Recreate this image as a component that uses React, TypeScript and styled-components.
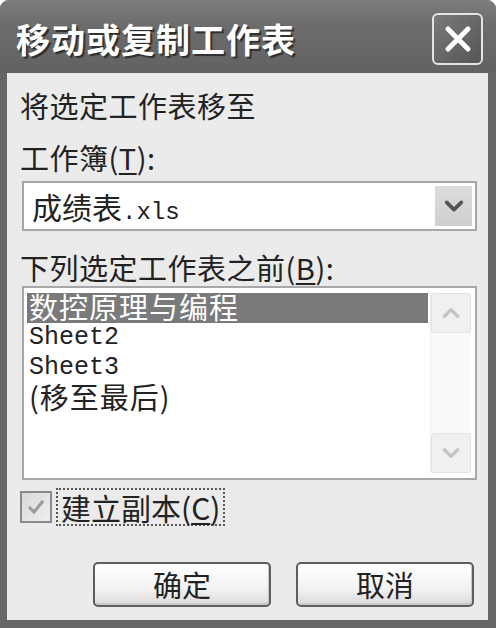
import styled, { createGlobalStyle } from "styled-components";

const GlobalStyle = createGlobalStyle`
  html, body {
    margin: 0;
    padding: 0;
    background: #ffffff;
  }
  body {
    font-family: "Noto Sans CJK SC", "Noto Sans", sans-serif;
  }
`;

const CJK = `"Noto Sans CJK SC", "Noto Sans", sans-serif`;
const MONO = `"Liberation Mono", "Noto Sans CJK SC", monospace`;

const Win = {
  frame: styled.div`
    width: 496px;
    height: 628px;
    box-sizing: border-box;
    background: #666666;
    border-radius: 9px 9px 0 0;
    display: flex;
    flex-direction: column;
    overflow: hidden;
    box-shadow: inset 0 2px 0 #8c8c8c;
  `,
  titleBar: styled.div`
    height: 73px;
    flex-shrink: 0;
    display: flex;
    align-items: center;
    justify-content: space-between;
    padding: 0 13px 0 16px;
    background: linear-gradient(#7c7c7c, #6c6c6c 35%, #626262);
  `,
  title: styled.h1`
    margin: 0;
    margin-top: 4px;
    font-family: ${CJK};
    font-size: 34px;
    font-weight: 700;
    letter-spacing: 1px;
    color: #ffffff;
    text-shadow: 2px 2px 1px #2e2e2e;
  `,
  close: styled.div`
    width: 51px;
    height: 52px;
    box-sizing: border-box;
    border: 2px solid #e4e4e4;
    border-radius: 6px;
    background: linear-gradient(135deg, #7a7a7a, #555555);
    display: flex;
    align-items: center;
    justify-content: center;
    margin-top: 5px;
  `,
  body: styled.div`
    flex: 1;
    margin: 0 8px 8px 7px;
    background: #ebebeb;
    padding: 15px 11px 0 15px;
    display: flex;
    flex-direction: column;
  `,
};

const Label = styled.div<{ $gap?: number }>`
  font-family: ${CJK};
  font-size: 29px;
  letter-spacing: 0.5px;
  line-height: 34px;
  color: #222;
  margin-left: -2px;
  margin-top: ${(p) => p.$gap ?? 0}px;
  u {
    text-decoration-thickness: 2px;
    text-underline-offset: 3px;
  }
`;

const Combo = {
  box: styled.div`
    margin-top: 7px;
    height: 50px;
    box-sizing: border-box;
    border: 2px solid #a6a6a6;
    background: #ffffff;
    display: flex;
    align-items: center;
    padding: 0 3px 0 8px;
  `,
  text: styled.div`
    flex: 1;
    font-family: ${CJK};
    font-size: 30px;
    color: #222;
    display: flex;
    align-items: baseline;
  `,
  ext: styled.span`
    font-family: ${MONO};
    font-size: 24px;
  `,
  button: styled.div`
    width: 37px;
    height: 40px;
    background: linear-gradient(#dcdcdc, #cfcfcf);
    display: flex;
    align-items: center;
    justify-content: center;
  `,
};

const List = {
  box: styled.div`
    margin-top: 2px;
    height: 194px;
    box-sizing: border-box;
    border: 2px solid #a8a8a8;
    background: #ffffff;
    display: flex;
    padding: 5px 4px 5px 3px;
  `,
  items: styled.div`
    flex: 1;
    display: flex;
    flex-direction: column;
  `,
  item: styled.div<{ $selected?: boolean; $mono?: boolean }>`
    height: 30px;
    line-height: ${(p) => (p.$mono ? "30px" : "27px")};
    padding-left: 2px;
    background: ${(p) => (p.$selected ? "#7a7a7a" : "transparent")};
    color: ${(p) => (p.$selected ? "#ffffff" : "#222")};
    font-family: ${(p) => (p.$mono ? MONO : CJK)};
    font-size: ${(p) => (p.$mono ? "25px" : "29px")};
    letter-spacing: ${(p) => (p.$mono ? "0" : "1px")};
    white-space: nowrap;
  `,
  scroll: styled.div`
    width: 40px;
    display: flex;
    flex-direction: column;
    justify-content: space-between;
    margin-left: 2px;
    background: #fafafa;
    border-left: 1px solid #eeeeee;
  `,
  arrow: styled.div`
    height: 40px;
    box-sizing: border-box;
    border: 1px solid #e2e2e2;
    border-radius: 3px;
    background: #f0f0f0;
    display: flex;
    align-items: center;
    justify-content: center;
  `,
};

const Check = {
  row: styled.div`
    margin-top: 8px;
    display: flex;
    align-items: center;
    gap: 4px;
    margin-left: -2px;
  `,
  box: styled.div`
    width: 32px;
    height: 32px;
    box-sizing: border-box;
    border: 2px solid #8a8a8a;
    background: linear-gradient(135deg, #d8d8d8, #f0f0f0);
    display: flex;
    align-items: center;
    justify-content: center;
  `,
  label: styled.div`
    font-family: ${CJK};
    font-size: 30px;
    line-height: 34px;
    color: #222;
    padding: 0 3px;
    border: 2px dotted #555;
    u {
      text-decoration-thickness: 2px;
      text-underline-offset: 3px;
    }
  `,
};

const Buttons = {
  row: styled.div`
    margin-top: 36px;
    display: flex;
    justify-content: flex-end;
    gap: 25px;
    padding-right: 3px;
  `,
  button: styled.button`
    width: 178px;
    height: 45px;
    box-sizing: border-box;
    border: 2px solid #5e5e5e;
    border-radius: 5px;
    background: linear-gradient(#ffffff, #f2f2f2 60%, #dadada);
    box-shadow: inset -1px -2px 0 #c8c8c8;
    font-family: ${CJK};
    font-size: 29px;
    color: #222;
    padding: 0;
    line-height: 1;
  `,
};

function Chevron({ dir, color, size }: { dir: "up" | "down"; color: string; size: number }) {
  const d = dir === "down" ? "M3 6 L9 12 L15 6" : "M3 12 L9 6 L15 12";
  return (
    <svg width={size} height={size} viewBox="0 0 18 18">
      <path d={d} fill="none" stroke={color} strokeWidth="3" strokeLinecap="round" strokeLinejoin="round" />
    </svg>
  );
}

export default function App() {
  return (
    <>
      <GlobalStyle />
      <Win.frame>
        <Win.titleBar>
          <Win.title>移动或复制工作表</Win.title>
          <Win.close>
            <svg width="30" height="30" viewBox="0 0 30 30">
              <path d="M5 5 L25 25 M25 5 L5 25" stroke="#ffffff" strokeWidth="5" strokeLinecap="round" />
            </svg>
          </Win.close>
        </Win.titleBar>
        <Win.body>
          <Label>将选定工作表移至</Label>
          <Label $gap={18}>
            工作簿(<u>T</u>):
          </Label>
          <Combo.box>
            <Combo.text>
              成绩表<Combo.ext>.xls</Combo.ext>
            </Combo.text>
            <Combo.button>
              <Chevron dir="down" color="#555" size={22} />
            </Combo.button>
          </Combo.box>
          <Label $gap={19}>
            下列选定工作表之前(<u>B</u>):
          </Label>
          <List.box>
            <List.items>
              <List.item $selected>数控原理与编程</List.item>
              <List.item $mono>Sheet2</List.item>
              <List.item $mono>Sheet3</List.item>
              <List.item>(移至最后)</List.item>
            </List.items>
            <List.scroll>
              <List.arrow>
                <Chevron dir="up" color="#c4c4c4" size={20} />
              </List.arrow>
              <List.arrow>
                <Chevron dir="down" color="#c4c4c4" size={20} />
              </List.arrow>
            </List.scroll>
          </List.box>
          <Check.row>
            <Check.box>
              <svg width="22" height="22" viewBox="0 0 22 22">
                <path d="M4 11 L9 16 L18 5" fill="none" stroke="#9a9a9a" strokeWidth="3" />
              </svg>
            </Check.box>
            <Check.label>
              建立副本(<u>C</u>)
            </Check.label>
          </Check.row>
          <Buttons.row>
            <Buttons.button>确定</Buttons.button>
            <Buttons.button>取消</Buttons.button>
          </Buttons.row>
        </Win.body>
      </Win.frame>
    </>
  );
}
